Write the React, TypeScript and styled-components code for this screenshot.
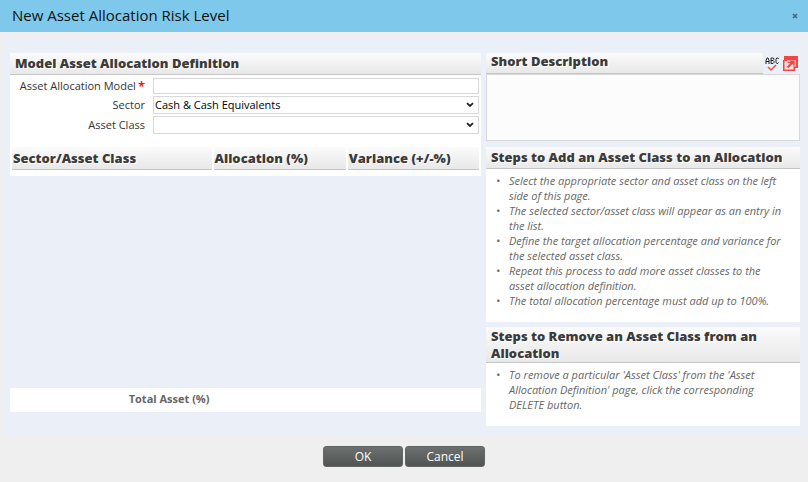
import React from "react";
import styled, { createGlobalStyle } from "styled-components";

const GlobalStyle = createGlobalStyle`
  * { box-sizing: border-box; }
  body {
    margin: 0;
    background: #efefef;
    color: #333;
    font-family: "Open Sans", sans-serif;
    font-size: 11px;
  }
  button, input, select, textarea { font: inherit; }
`;

const TitleBar = styled.header`
  display: flex;
  align-items: center;
  justify-content: space-between;
  height: 32px;
  padding: 0 8px 0 12px;
  background: #7ec8eb;
`;

const Title = styled.h1`
  margin: 0;
  padding-bottom: 2px;
  color: #111;
  font-size: 15px;
  font-weight: 400;
  line-height: 30px;
`;

const CloseButton = styled.button`
  display: flex;
  padding: 0;
  border: 0;
  background: none;
`;

const Content = styled.main`
  display: grid;
  grid-template-columns: 3fr 2fr;
  align-items: start;
  gap: 5px;
  margin: 5px 1px 0 3px;
  padding: 16px 7px 9px;
  background: #ebeff8;
`;

const Column = styled.div`
  min-width: 0;
`;

const Heading = styled.h2<{ $compact?: boolean }>`
  flex: 1;
  margin: 0;
  padding: ${(p) => (p.$compact ? "1px 5px 0" : "2px 5px")};
  border-bottom: 1px solid #c6c6c6;
  border-radius: 2px 2px 0 0;
  background: linear-gradient(#fbfbfb, #e8e8e8);
  color: #3b3b3b;
  font-size: 13px;
  font-weight: 800;
  line-height: 17px;
  text-shadow: 1px 1px 0 #fff;
`;

const Form = styled.form`
  background: #fff;
`;

const Fields = styled.div`
  display: grid;
  grid-template-columns: 135px 1fr;
  align-items: center;
  gap: 2px 8px;
  padding: 3px 2px 13px 0;
`;

const Label = styled.label`
  display: flex;
  justify-content: flex-end;
  line-height: 16px;
`;

const Required = styled.span`
  margin-left: 2px;
  color: #f00;
  font-size: 13px;
  font-weight: 600;
`;

const TextInput = styled.input`
  width: 100%;
  height: 16px;
  padding: 0 2px;
  border: 1px solid #d9d9d9;
  background: #fff;
`;

const SelectBox = styled.div`
  display: grid;
  align-items: center;

  & > * { grid-area: 1 / 1; }
  svg { justify-self: end; margin-right: 5px; pointer-events: none; }
`;

const Select = styled.select`
  appearance: none;
  width: 100%;
  height: 18px;
  padding: 0 18px 0 1px;
  border: 1px solid #d9d9d9;
  border-radius: 0;
  background: #fff;
  color: #000;
  line-height: 16px;
`;

const Table = styled.table`
  width: 100%;
  table-layout: fixed;
  border-spacing: 0;
`;

const HeadCell = styled.th<{ $width: string }>`
  width: ${(p) => p.$width};
  padding: 0 1px 6px;
  background: #fff;
  text-align: left;

  &:first-child { padding-left: 2px; }
  &:last-child { padding-right: 2px; }
`;

const ColumnTitle = styled.div`
  padding: 3px 1px 2px;
  border-bottom: 1px solid #c6c6c6;
  border-radius: 2px 2px 0 0;
  background: linear-gradient(#fbfbfb, #e8e8e8);
  color: #3b3b3b;
  font-size: 13px;
  font-weight: 800;
  line-height: 17px;
  text-shadow: 1px 1px 0 #fff;
`;

const EmptyCell = styled.td`
  height: 212px;
  padding: 0;
`;

const TotalCell = styled.td`
  height: 24px;
  padding: 0 3px 2px;
  background: #fff;
  color: #666;
  font-weight: 700;
  line-height: 16px;
  text-align: right;
`;

const DescriptionHead = styled.div`
  display: flex;
  align-items: center;
`;

const DescriptionLabel = styled(Heading)`
  padding: 0 5px 3px;
`;

const IconButton = styled.button`
  display: flex;
  margin: 0 2px;
  padding: 0;
  border: 0;
  background: none;
`;

const Description = styled.textarea`
  display: block;
  width: 100%;
  height: 67px;
  margin-bottom: 6px;
  border: 1px solid #d9d9d9;
  background: #fcfcfc;
  resize: none;
`;

const Steps = styled.section`
  background: #fff;

  & + & { margin-top: 5px; }
`;

const StepList = styled.ul`
  margin: 0;
  padding: 4px 14px 14px 23px;
  color: #666;
  font-size: 11px;
  font-style: italic;
  line-height: 15px;
`;

const Step = styled.li`
  list-style: none;

  &::before {
    content: "•";
    float: left;
    margin-left: -13px;
  }
`;

const Actions = styled.footer`
  display: flex;
  justify-content: center;
  gap: 2px;
  padding: 11px 0 15px;
`;

const ActionButton = styled.button`
  width: 80px;
  height: 21px;
  padding: 0;
  border: 1px solid #626665;
  border-radius: 3px;
  background: linear-gradient(#6c7070, #515453);
  color: #fff;
  font-size: 12px;
  line-height: 18px;
`;

const Chevron = () => (
  <svg width="8" height="6" viewBox="0 0 8 6" fill="none" aria-hidden="true">
    <path d="M1 1.2 4 4l3-2.8" stroke="#222" strokeWidth="1.8" />
  </svg>
);

const SpellIcon = () => (
  <svg width="14" height="16" viewBox="0 0 14 16" fill="none" aria-hidden="true">
    <path
      d="M1 8V4.500L2 2h1l1 2.500V8M1 5.500h3M6 2v5.500h2l1-1V5.500L8 4.500H6h2l.8-.8V2.500L8 2H6M13.500 3l-.7-1h-1L11 3.200v3l.8 1.300h1l.7-1"
      stroke="#222"
    />
    <path d="m3 11 3 3 5-5" stroke="#f24a45" strokeWidth="1.500" />
  </svg>
);

const ExpandIcon = () => (
  <svg width="15" height="15" viewBox="0 0 15 15" fill="none" aria-hidden="true">
    <path d="M1 0h14v12h-3v3H0V4h1Z" fill="#ef4744" />
    <path d="M1.500 5h3v2h-3ZM1.500 7h9v6.500h-9Z" fill="#fbdedd" />
    <path d="M4 4h9v6.500h-2V6H4Z" fill="#f7b3b1" />
    <path d="m4.500 11.500 5-5" stroke="#ef4744" strokeWidth="2.200" />
    <path d="M6 4.500h5.500V10Z" fill="#ef4744" />
  </svg>
);

const ADD_STEPS = [
  "Select the appropriate sector and asset class on the left side of this page.",
  "The selected sector/asset class will appear as an entry in the list.",
  "Define the target allocation percentage and variance for the selected asset class.",
  "Repeat this process to add more asset classes to the asset allocation definition.",
  "The total allocation percentage must add up to 100%.",
];

const REMOVE_STEPS = [
  "To remove a particular 'Asset Class' from the 'Asset Allocation Definition' page, click the corresponding DELETE button.",
];

const COLUMNS = [
  { title: "Sector/Asset Class", width: "43%" },
  { title: "Allocation (%)", width: "auto" },
  { title: "Variance (+/-%)", width: "auto" },
];

type StepsPanelProps = { title: string; steps: string[]; compact?: boolean };

function StepsPanel({ title, steps, compact }: StepsPanelProps) {
  return (
    <Steps>
      <Heading $compact={compact}>{title}</Heading>
      <StepList>
        {steps.map((step) => (
          <Step key={step}>{step}</Step>
        ))}
      </StepList>
    </Steps>
  );
}

export default function App() {
  return (
    <>
      <GlobalStyle />
      <TitleBar>
        <Title>New Asset Allocation Risk Level</Title>
        <CloseButton type="button" aria-label="Close">
          <svg width="9" height="6" viewBox="0 0 9 6" fill="none" aria-hidden="true">
            <path d="m2 1 4 4m0-4-4 4" stroke="#3d6a7d" strokeWidth="1.600" />
          </svg>
        </CloseButton>
      </TitleBar>
      <Content>
        <Column>
          <Form>
            <Heading>Model Asset Allocation Definition</Heading>
            <Fields>
              <Label htmlFor="model">
                Asset Allocation Model<Required>*</Required>
              </Label>
              <TextInput id="model" type="text" required />
              <Label htmlFor="sector">Sector</Label>
              <SelectBox>
                <Select id="sector" defaultValue="cash">
                  <option value="cash">Cash &amp; Cash Equivalents</option>
                </Select>
                <Chevron />
              </SelectBox>
              <Label htmlFor="asset-class">Asset Class</Label>
              <SelectBox>
                <Select id="asset-class" defaultValue="">
                  <option value="" />
                </Select>
                <Chevron />
              </SelectBox>
            </Fields>
          </Form>
          <Table>
            <thead>
              <tr>
                {COLUMNS.map(({ title, width }) => (
                  <HeadCell key={title} scope="col" $width={width}>
                    <ColumnTitle>{title}</ColumnTitle>
                  </HeadCell>
                ))}
              </tr>
            </thead>
            <tbody>
              <tr>
                <EmptyCell colSpan={3} />
              </tr>
            </tbody>
            <tfoot>
              <tr>
                <TotalCell>Total Asset (%)</TotalCell>
                <TotalCell />
                <TotalCell />
              </tr>
            </tfoot>
          </Table>
        </Column>
        <Column>
          <DescriptionHead>
            <DescriptionLabel>
              <label htmlFor="description">Short Description</label>
            </DescriptionLabel>
            <IconButton type="button" aria-label="Check spelling">
              <SpellIcon />
            </IconButton>
            <IconButton type="button" aria-label="Expand editor">
              <ExpandIcon />
            </IconButton>
          </DescriptionHead>
          <Description id="description" />
          <StepsPanel title="Steps to Add an Asset Class to an Allocation" steps={ADD_STEPS} />
          <StepsPanel title="Steps to Remove an Asset Class from an Allocation" steps={REMOVE_STEPS} compact />
        </Column>
      </Content>
      <Actions>
        <ActionButton type="button">OK</ActionButton>
        <ActionButton type="button">Cancel</ActionButton>
      </Actions>
    </>
  );
}
